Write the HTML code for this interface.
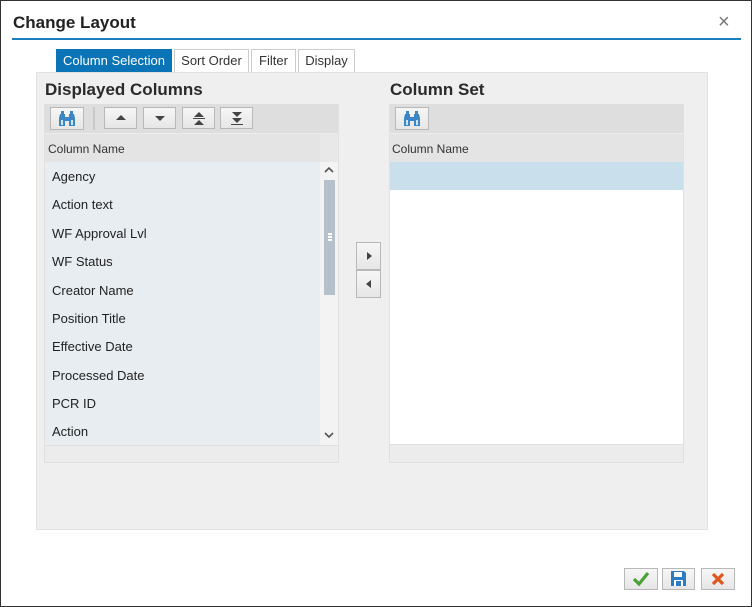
<!DOCTYPE html>
<html><head><meta charset="utf-8"><style>
*{margin:0;padding:0;box-sizing:border-box}
body{width:752px;height:607px;background:#fff;font-family:"Liberation Sans",Arial,sans-serif;position:relative;overflow:hidden}
.a{position:absolute}
.frame{left:0;top:0;width:752px;height:607px;border:1px solid #333}
.btn{position:absolute;background:linear-gradient(#f6f6f6,#e6e6e6);border:1px solid #b8b8b8;}
.tab{position:absolute;top:49px;height:23px;border:1px solid #ccc;border-bottom:none;background:#fff;font-size:13px;color:#333;text-align:center;line-height:21px}
.row{position:absolute;left:7px;font-size:13px;color:#222}
.tri{position:absolute;width:0;height:0}
</style></head><body>
<div class="a frame"></div>
<div class="a" style="left:13px;top:13px;font-size:17px;font-weight:bold;color:#222">Change Layout</div>
<div class="a" style="left:718px;top:11px;font-size:20px;color:#777">×</div>
<div class="a" style="left:12px;top:38px;width:729px;height:2px;background:#1a7fc1"></div>

<div class="tab" style="left:56px;width:116px;background:#0a74b6;border-color:#0a74b6;color:#fff">Column Selection</div>
<div class="tab" style="left:174px;width:75px">Sort Order</div>
<div class="tab" style="left:251px;width:45px">Filter</div>
<div class="tab" style="left:298px;width:57px">Display</div>

<div class="a" style="left:36px;top:72px;width:672px;height:458px;background:#efefef;border:1px solid #e2e2e2"></div>

<div class="a" style="left:45px;top:80px;font-size:17px;font-weight:bold;color:#2a2a2a">Displayed Columns</div>
<div class="a" style="left:390px;top:80px;font-size:17px;font-weight:bold;color:#2a2a2a">Column Set</div>

<!-- left table -->
<div class="a" style="left:44px;top:104px;width:295px;height:359px;border:1px solid #e0e0e0;background:#ececec"></div>
<div class="a" style="left:45px;top:104px;width:293px;height:29px;background:#dedede"></div>
<div class="btn" style="left:50px;top:107px;width:34px;height:23px"></div>
<svg class="a" style="left:58px;top:110px" width="18" height="17" viewBox="0 0 18 17"><path d="M2 4h5v12H1V8zM11 4h5l1 4v8h-6zM7 7h4v4H7z" fill="#3d86c6"/><path d="M3 1h3v3H3zM12 1h3v3h-3z" fill="#3d86c6"/><path d="M3 10h2v5H3zM13 10h2v5h-2z" fill="#cfe3f3"/></svg>
<div class="a" style="left:93px;top:107px;width:2px;height:23px;background:#c9c9c9"></div>
<div class="btn" style="left:104px;top:107px;width:33px;height:22px"></div>
<div class="btn" style="left:143px;top:107px;width:33px;height:22px"></div>
<div class="btn" style="left:182px;top:107px;width:33px;height:22px"></div>
<div class="btn" style="left:220px;top:107px;width:33px;height:22px"></div>
<div class="tri" style="left:116px;top:115px;border-left:5px solid transparent;border-right:5px solid transparent;border-bottom:5px solid #444"></div>
<div class="tri" style="left:155px;top:116px;border-left:5px solid transparent;border-right:5px solid transparent;border-top:5px solid #444"></div>
<div class="tri" style="left:194px;top:112px;border-left:5px solid transparent;border-right:5px solid transparent;border-bottom:5px solid #444"></div>
<div class="a" style="left:193px;top:118px;width:12px;height:1px;background:#444"></div>
<div class="tri" style="left:194px;top:120px;border-left:5px solid transparent;border-right:5px solid transparent;border-bottom:5px solid #444"></div>
<div class="tri" style="left:232px;top:112px;border-left:5px solid transparent;border-right:5px solid transparent;border-top:5px solid #444"></div>
<div class="tri" style="left:232px;top:118px;border-left:5px solid transparent;border-right:5px solid transparent;border-top:5px solid #444"></div>
<div class="a" style="left:231px;top:124px;width:12px;height:1px;background:#444"></div>

<div class="a" style="left:45px;top:134px;width:275px;height:28px;background:#e4e4e4"></div>
<div class="a" style="left:48px;top:142px;font-size:12px;color:#333">Column Name</div>
<div class="a" style="left:320px;top:134px;width:18px;height:28px;background:#e8e8e8"></div>
<div class="a" style="left:45px;top:162px;width:275px;height:283px;background:#e8edf1">
<div class="row" style="top:7px">Agency</div>
<div class="row" style="top:35px">Action text</div>
<div class="row" style="top:64px">WF Approval Lvl</div>
<div class="row" style="top:92px">WF Status</div>
<div class="row" style="top:121px">Creator Name</div>
<div class="row" style="top:149px">Position Title</div>
<div class="row" style="top:177px">Effective Date</div>
<div class="row" style="top:206px">Processed Date</div>
<div class="row" style="top:234px">PCR ID</div>
<div class="row" style="top:262px">Action</div>
</div>
<div class="a" style="left:320px;top:162px;width:18px;height:283px;background:#f3f3f3"></div>
<svg class="a" style="left:324px;top:167px" width="10" height="6"><path d="M1 5l4-4 4 4" stroke="#555" stroke-width="1.6" fill="none"/></svg>
<div class="a" style="left:324px;top:180px;width:11px;height:115px;background:#b6c0ca"></div>
<div class="a" style="left:328px;top:233px;width:4px;height:2px;background:#fff;box-shadow:0 3px #fff,0 6px #fff"></div>
<svg class="a" style="left:324px;top:432px" width="10" height="6"><path d="M1 1l4 4 4-4" stroke="#555" stroke-width="1.6" fill="none"/></svg>
<div class="a" style="left:45px;top:445px;width:293px;height:17px;background:#ececec;border-top:1px solid #e0e0e0"></div>

<!-- arrows -->
<div class="btn" style="left:356px;top:242px;width:25px;height:28px"></div>
<div class="btn" style="left:356px;top:270px;width:25px;height:28px"></div>
<div class="tri" style="left:367px;top:252px;border-top:4px solid transparent;border-bottom:4px solid transparent;border-left:5px solid #444"></div>
<div class="tri" style="left:366px;top:280px;border-top:4px solid transparent;border-bottom:4px solid transparent;border-right:5px solid #444"></div>

<!-- right table -->
<div class="a" style="left:389px;top:104px;width:295px;height:359px;border:1px solid #e0e0e0;background:#ececec"></div>
<div class="a" style="left:390px;top:104px;width:293px;height:29px;background:#dedede"></div>
<div class="btn" style="left:395px;top:107px;width:34px;height:23px"></div>
<svg class="a" style="left:403px;top:110px" width="18" height="17" viewBox="0 0 18 17"><path d="M2 4h5v12H1V8zM11 4h5l1 4v8h-6zM7 7h4v4H7z" fill="#3d86c6"/><path d="M3 1h3v3H3zM12 1h3v3h-3z" fill="#3d86c6"/><path d="M3 10h2v5H3zM13 10h2v5h-2z" fill="#cfe3f3"/></svg>
<div class="a" style="left:390px;top:134px;width:293px;height:28px;background:#e4e4e4"></div>
<div class="a" style="left:392px;top:142px;font-size:12px;color:#333">Column Name</div>
<div class="a" style="left:390px;top:162px;width:293px;height:28px;background:#c9e0ec"></div>
<div class="a" style="left:390px;top:190px;width:293px;height:254px;background:#fff"></div>
<div class="a" style="left:390px;top:444px;width:293px;height:18px;background:#ececec;border-top:1px solid #e0e0e0"></div>

<!-- footer -->
<div class="btn" style="left:624px;top:568px;width:34px;height:22px"></div>
<div class="btn" style="left:662px;top:568px;width:33px;height:22px"></div>
<div class="btn" style="left:701px;top:568px;width:34px;height:22px"></div>
<svg class="a" style="left:632px;top:570px" width="18" height="17"><path d="M2 9l5 5 9-11" stroke="#4aa13a" stroke-width="3.2" fill="none"/></svg>
<svg class="a" style="left:670px;top:570px" width="17" height="17" viewBox="0 0 17 17"><path d="M1 1h13l2 2v13H1z" fill="#2e7cc4"/><rect x="4" y="2" width="8" height="5" fill="#fff"/><rect x="4" y="10" width="9" height="6" fill="#fff"/><rect x="6" y="11" width="5" height="5" fill="#2e7cc4"/></svg>
<svg class="a" style="left:711px;top:572px" width="14" height="14"><path d="M2 2l10 10M12 2L2 12" stroke="#e0561f" stroke-width="3.2"/></svg>
</body></html>
